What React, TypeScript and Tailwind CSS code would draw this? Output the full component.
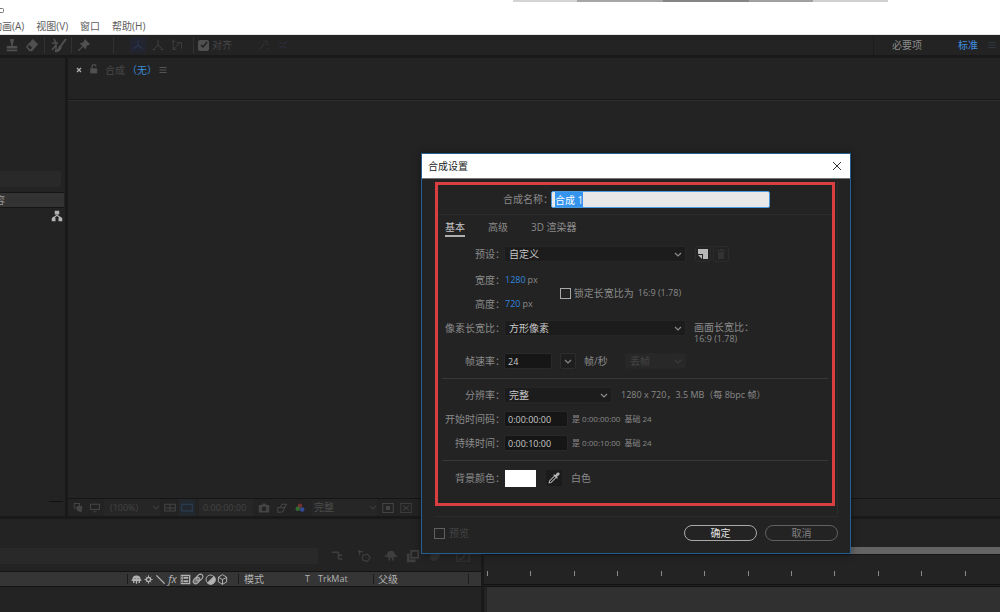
import { useEffect, useRef } from "react";
import type { ReactNode, SelectHTMLAttributes } from "react";

function Icon({ children, className = "", size = "size-3" }: { children: ReactNode; className?: string; size?: string }) {
  return (
    <svg
      viewBox="0 0 16 16"
      className={"shrink-0 " + size + " " + className}
      fill="none"
      stroke="currentColor"
      strokeWidth="1.4"
      aria-hidden="true"
    >
      {children}
    </svg>
  );
}

function Chevron({ className = "" }: { className?: string }) {
  return (
    <svg viewBox="0 0 8 5" className={"h-[5px] w-2 shrink-0 " + className} fill="none" stroke="currentColor" strokeWidth="1.2" aria-hidden="true">
      <path d="M1 1l3 3 3-3" />
    </svg>
  );
}

function ToolButton({ label, children, className = "" }: { label: string; children: ReactNode; className?: string }) {
  return (
    <button type="button" aria-label={label} className={"flex h-4 shrink-0 items-center justify-center " + className}>
      {children}
    </button>
  );
}

function Separator({ className = "" }: { className?: string }) {
  return <span className={"h-4 w-px shrink-0 bg-[#323232] " + className} />;
}

function MenuBar() {
  return (
    <header className="relative h-[35px] shrink-0 overflow-hidden border-b border-[#e4e4e4] bg-white">
      <div className="absolute left-[513px] top-0 flex h-0.5 w-[375px]">
        <span className="w-16 bg-[#d4d4d4]" />
        <span className="w-[86px] bg-[#a6a6a6]" />
        <span className="w-[86px] bg-[#858585]" />
        <span className="w-16 bg-[#a0a0a0]" />
        <span className="flex-1 bg-[#d0d0d0]" />
      </div>
      <svg viewBox="0 0 4 6" className="mt-2 h-1.5 w-1" fill="none" stroke="#777" aria-hidden="true">
        <path d="M0 .5h2.5q1 0 1 1v2q0 1-1 1H0" />
      </svg>
      <nav className="-ml-2 mt-1 flex gap-3 text-[10px] leading-4 text-[#5c5c5c]">
        <a href="#animation">动画(A)</a>
        <a href="#view">视图(V)</a>
        <a href="#window">窗口</a>
        <a href="#help">帮助(H)</a>
      </nav>
    </header>
  );
}

function Toolbar() {
  return (
    <div className="flex h-[23px] shrink-0 items-center border-b-3 border-[#191919] bg-[#232323] text-[10px] text-[#505050]">
      <ToolButton label="仿制图章" className="ml-1 w-4">
        <Icon size="size-3.5">
          <path fill="currentColor" stroke="none" d="M6 1h4v3l-1 2v3h5v3H2V9h5V6L6 4zM2 13h12v2H2z" />
        </Icon>
      </ToolButton>
      <ToolButton label="橡皮擦" className="ml-1 w-4">
        <Icon size="size-3.5">
          <path fill="currentColor" stroke="none" fillRule="evenodd" d="M9 1l6 6-7 8H5L1 10zM5 8l-2 2 3 3 2-2z" />
        </Icon>
      </ToolButton>
      <Separator className="ml-1" />
      <ToolButton label="Roto 笔刷" className="ml-1.5 w-4">
        <Icon size="size-4">
          <path d="M3 2l2 4v8M1 6h6M1 13l4-5" strokeWidth="1.5" />
          <path d="M15 2l-6 8M9 9q-1 5-5 5 4 1 6-4" strokeWidth="2" />
        </Icon>
      </ToolButton>
      <Separator className="ml-1" />
      <ToolButton label="操控点" className="ml-1 w-4">
        <Icon size="size-3.5">
          <path fill="currentColor" stroke="none" d="M9 1l6 6-2 1-2 1-1 4-3-3-5 5-1-1 5-5-3-3 4-1 1-2z" />
        </Icon>
      </ToolButton>
      <Separator className="ml-[21px]" />
      <ToolButton label="本地轴" className="ml-4 w-4 bg-[#222530] text-[#2a3655]">
        <Icon>
          <path d="M8 2v7l-6 4M8 9l6 4" />
        </Icon>
      </ToolButton>
      <ToolButton label="世界轴" className="ml-1 w-4">
        <Icon className="text-[#404040]">
          <path d="M8 1v7l-5 5M8 8l5 5M1 14h3M12 14h3" />
        </Icon>
      </ToolButton>
      <ToolButton label="视图轴" className="ml-[3px] w-4">
        <Icon className="text-[#3c3c3c]">
          <path d="M1 3h5M3 1v13h4M3 14l10-10M7 5h7v8" />
        </Icon>
      </ToolButton>
      <Separator className="ml-2" />
      <label className="ml-1 flex items-center gap-[3px] text-[#484848]">
        <input type="checkbox" defaultChecked className="peer sr-only" />
        <span className="flex size-[11px] items-center justify-center rounded-xs bg-[#505050] text-[#202020]">
          <svg viewBox="0 0 8 8" className="size-2" fill="none" stroke="currentColor" strokeWidth="1.5" aria-hidden="true">
            <path d="M1 4l2 2 4-5" />
          </svg>
        </span>
        对齐
      </label>
      <ToolButton label="对齐边缘" className="ml-6 w-4">
        <Icon className="text-[#343434]">
          <path d="M2 14l7-8M7 3h5v5M12 13h2" />
        </Icon>
      </ToolButton>
      <ToolButton label="对齐特征" className="ml-[3px] w-4">
        <Icon className="text-[#2b2b3c]">
          <path d="M2 3l4 3h4l4-3M2 13l4-3h4l4 3" />
        </Icon>
      </ToolButton>
      <div className="ml-auto flex h-full w-[127px] items-center whitespace-nowrap border-l border-[#1c1c1c] pl-[18px]">
        <button type="button" className="shrink-0 text-[#8c8c8c]">必要项</button>
        <button type="button" className="ml-9 shrink-0 text-[#3f8fe0]">标准</button>
        <button type="button" aria-label="工作区菜单" className="ml-2.5 shrink-0 text-[#2f3642]">
          <Icon size="size-2">
            <path d="M1 3h14M1 8h14M1 13h14" strokeWidth="2" />
          </Icon>
        </button>
      </div>
    </div>
  );
}

function ProjectPanel() {
  return (
    <aside className="flex w-[68px] shrink-0 flex-col border-r-3 border-[#191919]">
      <div className="mr-1 mt-[113px] h-4 rounded-r-xs bg-[#292929]" />
      <div className="mr-px mt-[5px] h-4 overflow-hidden border-y border-[#151515] bg-[#333333]">
        <span className="-ml-[5px] block text-[10px] leading-3.5 text-[#999]">容</span>
      </div>
      <div className="mr-0.5 mt-0.5 flex justify-end text-[#b4b4b4]">
        <Icon>
          <path fill="currentColor" stroke="none" d="M5 1h6v5H5zM1 11l2-2h2l1 2v4H1zM10 11l1-2h2l2 2v4h-5z" />
          <path d="M8 6v2M4 10l4-3 4 3" />
        </Icon>
      </div>
      <div className="mb-3.5 mr-0.5 mt-auto h-px w-3.5 self-end bg-[#111]" />
    </aside>
  );
}

function CompositionPanel() {
  return (
    <section className="flex min-w-0 flex-1 flex-col">
      <div className="flex h-[42px] items-start border-b border-[#171717] pt-1 text-[10px] leading-4">
        <button type="button" aria-label="关闭" className="ml-2 flex h-4 items-center text-[#b0b0b0]">
          <svg viewBox="0 0 6 6" className="size-1.5" fill="none" stroke="currentColor" strokeWidth="1.3" aria-hidden="true">
            <path d="M1 1l4 4M5 1L1 5" />
          </svg>
        </button>
        <Icon size="size-2.5" className="ml-[7px] mt-0.5 text-[#505050]">
          <path fill="currentColor" stroke="none" d="M2 7h11v8H2z" />
          <path d="M5 7V4q0-3 3-3t3 3" strokeWidth="2" />
        </Icon>
        <span className="ml-1.5 text-[#484848]">合成</span>
        <span className="ml-0.5 text-[#3a8ddb]">（无）</span>
        <button type="button" aria-label="面板菜单" className="ml-0.5 flex h-4 items-center text-[#555]">
          <Icon size="size-2">
            <path d="M1 3h14M1 8h14M1 13h14" strokeWidth="2" />
          </Icon>
        </button>
      </div>
      <div className="flex-1 border-t border-[#2d2d2d]" />
      <div className="flex h-[18px] shrink-0 items-center border-t border-[#151515] text-[9px] text-[#444]">
        <Icon className="ml-1">
          <path d="M3 2h7v6H3z" />
          <path fill="currentColor" d="M7 6h6l-1 7-5-2z" />
        </Icon>
        <Icon className="ml-[5px]">
          <path d="M2 3h12v7H2zM6 13h4" />
        </Icon>
        <button type="button" className="ml-[3px] flex h-full w-14 items-center justify-between bg-[#262626] pl-1.5">
          (100%)
          <Chevron className="text-[#3a3a3a]" />
        </button>
        <Icon className="ml-1">
          <path d="M1 3h14v9H1zM8 3v9M1 8h14" />
        </Icon>
        <span className="ml-[3px] flex h-full w-4 items-center justify-center bg-[#22282e] text-[#2b4058]">
          <Icon>
            <path d="M1 3h14v9H1z" />
          </Icon>
        </span>
        <button type="button" className="ml-1 flex h-full w-[54px] items-center bg-[#272727] pl-1">0:00:00:00</button>
        <Icon className="ml-[5px]">
          <path fill="currentColor" stroke="none" fillRule="evenodd" d="M1 4h4l1-2h4l1 2h4v10H1zM8 6a3 3 0 100 6 3 3 0 000-6z" />
        </Icon>
        <Icon className="ml-1.5">
          <path d="M8 3h6l-2 4-3 6-6 1-1-6 4-1zM6 7q4 2 6-1" />
        </Icon>
        <Icon className="ml-1.5">
          <circle cx="8" cy="5" r="3" fill="#742f2f" stroke="none" />
          <circle cx="5" cy="9" r="3" fill="#316b31" stroke="none" />
          <circle cx="11" cy="10" r="3" fill="#334b94" stroke="none" />
        </Icon>
        <button type="button" className="ml-1.5 flex h-full w-[65px] items-center justify-between bg-[#262626] pl-0.5 text-[10px] text-[#4d4d4d]">
          完整
          <Chevron className="text-[#3a3a3a]" />
        </button>
        <Icon className="ml-[5px]">
          <path d="M1 2h14v12H1z" />
          <path fill="currentColor" d="M6 6h4v4H6z" />
        </Icon>
        <Icon className="ml-1.5 text-[#3c3c3c]">
          <path d="M1 2h14v12H1zM4 5l8 6M12 5l-8 6" />
        </Icon>
      </div>
    </section>
  );
}

const tickMarks = Array.from({ length: 12 }, (_, i) => i);

function TimelinePanel() {
  return (
    <section className="flex h-24 shrink-0 border-t-3 border-[#191919] text-[10px]">
      <div className="flex w-[484px] shrink-0 flex-col border-r-3 border-[#191919]">
        <div className="mt-[29px] flex h-4 items-center text-[#3e3e3e]">
          <input aria-label="搜索图层" className="h-4 w-[318px] bg-[#292929] outline-none" />
          <Icon className="ml-[13px]">
            <path d="M1 3h9M10 3v9M10 7h5M10 12h5" strokeWidth="2" />
          </Icon>
          <Icon size="size-3.5" className="ml-3.5">
            <path d="M3 1v6M1 3h6M7 7l5-1 3 4-3 4-5-1-1-3z" />
          </Icon>
          <Icon size="size-3.5" className="ml-[13px]">
            <path fill="currentColor" stroke="none" d="M3 7q1-5 5-5t5 5h2v2h-4v4H9v-3H7v3H5V9H1V7z" />
          </Icon>
          <Icon size="size-3.5" className="ml-2">
            <path fill="currentColor" fillRule="evenodd" stroke="none" d="M5 1h10v10H5zM7 3v6h6V3zM1 5h3v7h7v3H1z" />
          </Icon>
          <Icon size="size-3.5" className="ml-2 text-[#303030]">
            <ellipse cx="8" cy="8" rx="6" ry="4" fill="currentColor" transform="rotate(-40 8 8)" />
          </Icon>
          <Icon size="size-3.5" className="ml-3.5 text-[#333]">
            <path d="M1 2h14v12H1zM3 12q5 0 6-4t5-4" />
          </Icon>
        </div>
        <div className="mt-[7px] flex h-4 items-center border-y border-[#131313] bg-[#353535] text-[#b2b2b2]">
          <span className="ml-[127px] mr-[3px] h-2.5 w-px shrink-0 bg-[#1c1c1c]" />
          <Icon size="size-[11px]">
            <path fill="currentColor" stroke="none" fillRule="evenodd" d="M2 8q0-6 6-6t6 6h1v2h-2v3h-2v-3H9v4H7v-4H5v3H3v-3H1V8zM5 6v1h2V6zM9 6v1h2V6z" />
          </Icon>
          <Icon size="size-[11px]" className="ml-px">
            <circle cx="8" cy="8" r="3" strokeWidth="2" />
            <path d="M8 2v3M8 11v3M2 8h3M11 8h3M4 4l1 1M11 11l1 1M12 4l-1 1M4 12l1-1" />
          </Icon>
          <Icon size="size-[11px]" className="ml-px">
            <path d="M2 2l12 12" strokeWidth="2" />
          </Icon>
          <i className="ml-px w-[11px] text-center text-[11px] leading-3">fx</i>
          <Icon size="size-[11px]" className="ml-0.5">
            <path fill="currentColor" fillRule="evenodd" stroke="none" d="M1 1h14v14H1zM4 3v10h9V3zM5 4h7v3H5zM5 9h7v3H5zM2 3v2h1V3zM2 7v2h1V7zM2 11v2h1v-2z" />
          </Icon>
          <Icon className="ml-px">
            <ellipse cx="6" cy="10" rx="5" ry="3.5" transform="rotate(-45 6 10)" fill="#707070" />
            <ellipse cx="10" cy="6" rx="5" ry="3.5" transform="rotate(-45 10 6)" />
          </Icon>
          <Icon size="size-[11px]" className="ml-px">
            <circle cx="8" cy="8" r="6.5" />
            <path fill="currentColor" d="M13 3.500A6.500 6.500 0 013.500 13z" />
          </Icon>
          <Icon size="size-[11px]" className="ml-px">
            <path d="M8 1l6 3.500v7L8 15l-6-3.500v-7zM2 5l6 3 6-3M8 8v7" />
          </Icon>
          <span className="ml-2.5 h-2.5 w-px bg-[#1c1c1c]" />
          <span className="ml-[5px] w-[61px]">模式</span>
          <span className="w-[13px] text-[9px]">T</span>
          <span className="text-[9px]">TrkMat</span>
          <span className="ml-auto h-2.5 w-px bg-[#1c1c1c]" />
          <span className="ml-1">父级</span>
          <span className="ml-[70px] mr-3 h-2.5 w-px bg-[#1c1c1c]" />
        </div>
      </div>
      <div className="flex min-w-0 flex-1 flex-col overflow-hidden">
        <div className="mt-[28px] h-2 border-b border-[#151515] bg-[#646464]" />
        <div className="-mr-2 ml-[3px] mt-4 flex h-[13px]">
          {tickMarks.map((i) => (
            <span key={i} className="flex-1">
              <span className="block h-[5px] w-px bg-[#8a8a8a]" />
            </span>
          ))}
        </div>
        <div className="h-[3px] border-y border-[#111]" />
        <div className="ml-[3px] flex-1 bg-[#303030]" />
      </div>
    </section>
  );
}

type FieldSelectProps = SelectHTMLAttributes<HTMLSelectElement> & { option: string; width: string };

function FieldSelect({ option, width, disabled, ...rest }: FieldSelectProps) {
  return (
    <span className={"relative flex items-center " + width + (disabled ? " text-[#444]" : " text-[#c8c8c8]")}>
      <select
        {...rest}
        disabled={disabled}
        className="h-4 w-full appearance-none rounded-xs border border-[#262626] bg-[#1c1c1c] pl-1 text-[10px] leading-3.5 outline-none disabled:bg-[#282828]"
      >
        <option>{option}</option>
      </select>
      <Chevron className={"pointer-events-none absolute right-1 " + (disabled ? "text-[#3a3a3a]" : "text-[#8c8c8c]")} />
    </span>
  );
}

function Row({ label, htmlFor, children, className = "h-6 items-center" }: { label: string; htmlFor?: string; children: ReactNode; className?: string }) {
  return (
    <div className={"flex " + className}>
      <label htmlFor={htmlFor} className="-mr-px w-[67px] shrink-0 whitespace-nowrap text-right leading-4">
        {label}
      </label>
      {children}
    </div>
  );
}

const fieldInput = "h-4 rounded-xs border border-[#292929] bg-[#161616] pl-[3px] text-[9px] text-[#c8c8c8] outline-none";

function CompositionDialog() {
  const nameRef = useRef<HTMLInputElement>(null);

  useEffect(() => {
    nameRef.current?.focus();
    nameRef.current?.select();
  }, []);

  return (
    <div
      role="dialog"
      aria-labelledby="dialog-title"
      className="absolute left-[421px] top-[153px] flex w-[430px] flex-col border border-[#245f92] bg-[#232323] text-[10px] text-[#8a8a8a] shadow-[0_0_8px_rgba(0,0,0,0.4)]"
    >
      <div className="flex h-[25px] items-center justify-between border-b border-[#777] bg-white pl-1.5 pr-2 text-[#222]">
        <h1 id="dialog-title">合成设置</h1>
        <button type="button" aria-label="关闭">
          <svg viewBox="0 0 10 10" className="size-2.5" fill="none" stroke="#333" aria-hidden="true">
            <path d="M1 1l8 8M9 1L1 9" />
          </svg>
        </button>
      </div>
      <form className="flex flex-col">
        <div className="ml-[13px] mr-3 mt-[3px] border-b border-r border-[#2c2c2c] pb-2.5 pr-0.5">
          <div className="h-[324px] border-3 border-[#d93f40]">
            <div className="flex h-[30px] items-center border-b border-[#2d2d2d]">
              <label htmlFor="comp-name" className="ml-[65px] w-12 whitespace-nowrap">
                合成名称：
              </label>
              <input
                id="comp-name"
                ref={nameRef}
                defaultValue="合成 1"
                className="h-[17px] w-[219px] rounded-xs border border-[#4a9ae0] bg-[#e8e8e8] pl-[3px] text-[10px] leading-3 text-[#333] outline-none selection:bg-[#3494ee] selection:text-white"
              />
            </div>
            <div role="tablist" className="flex h-[25px] items-start pl-[7px] pt-1 leading-4">
              <button type="button" role="tab" aria-selected="true" className="h-[18px] border-b-2 border-[#b0b0b0] text-[#c8c8c8]">
                基本
              </button>
              <button type="button" role="tab" aria-selected="false" className="ml-[23px]">高级</button>
              <button type="button" role="tab" aria-selected="false" className="ml-[23px]">3D 渲染器</button>
            </div>
            <Row label="预设：" htmlFor="preset" className="h-7 items-center">
              <FieldSelect id="preset" option="自定义" width="w-[182px]" />
              <button type="button" aria-label="新建预设" className="ml-[9px] flex size-4 items-center justify-center rounded-xs border border-[#2b2b2b] text-[#b8b8b8]">
                <svg viewBox="0 0 10 10" className="size-2.5" fill="currentColor" aria-hidden="true">
                  <path d="M0 0h10v10H5V5H0zM0 6h4v4z" />
                </svg>
              </button>
              <button type="button" aria-label="删除预设" className="ml-0.5 flex size-4 items-center justify-center rounded-xs border border-[#2b2b2b] text-[#333]">
                <svg viewBox="0 0 10 10" className="size-2.5" fill="currentColor" aria-hidden="true">
                  <path d="M1 1h3V0h2v1h3v1H1zM2 3h6v7H2z" />
                </svg>
              </button>
            </Row>
            <div className="flex items-center">
              <div>
                <Row label="宽度：">
                  <button type="button" className="ml-px text-[9px] text-[#2f86de]">1280</button>
                  <span className="ml-0.5 text-[9px]">px</span>
                </Row>
                <Row label="高度：">
                  <button type="button" className="ml-px text-[9px] text-[#2f86de]">720</button>
                  <span className="ml-0.5 text-[9px]">px</span>
                </Row>
              </div>
              <label className="ml-[22px] mt-0.5 flex items-center">
                <input type="checkbox" className="mr-[3px] size-[11px] appearance-none border border-[#a8a8a8]" />
                锁定长宽比为
                <span className="ml-1 text-[9px]">16:9 (1.78)</span>
              </label>
            </div>
            <Row label="像素长宽比：" htmlFor="pixel-aspect" className="h-7 items-start pt-1">
              <FieldSelect id="pixel-aspect" option="方形像素" width="w-[182px]" />
              <span className="ml-2 flex flex-col pt-px leading-3">
                <span>画面长宽比：</span>
                <span className="text-[9px]">16:9 (1.78)</span>
              </span>
            </Row>
            <Row label="帧速率：" htmlFor="frame-rate" className="h-[34px] items-center">
              <input id="frame-rate" defaultValue="24" className={fieldInput + " w-12"} />
              <button type="button" aria-label="选择帧速率" className="ml-2 flex size-4 items-center justify-center rounded-xs border border-[#2d2d2d] bg-[#1e1e1e]">
                <Chevron />
              </button>
              <span className="ml-2 w-[41px]">帧/秒</span>
              <FieldSelect aria-label="丢帧" option="丢帧" width="w-[61px]" disabled />
            </Row>
            <div className="mx-1 border-b border-[#383838]" />
            <div className="pb-[5px] pt-1">
              <Row label="分辨率：" htmlFor="resolution">
                <FieldSelect id="resolution" option="完整" width="w-[108px]" />
                <span className="ml-[9px] text-[9px]">1280 x 720，3.5 MB（每 8bpc 帧）</span>
              </Row>
              <Row label="开始时间码：" htmlFor="start-time">
                <input id="start-time" defaultValue="0:00:00:00" className={fieldInput + " w-16"} />
                <span className="ml-1 text-[8px]">是 0:00:00:00&ensp;基础 24</span>
              </Row>
              <Row label="持续时间：" htmlFor="duration">
                <input id="duration" defaultValue="0:00:10:00" className={fieldInput + " w-16"} />
                <span className="ml-1 text-[8px]">是 0:00:10:00&ensp;基础 24</span>
              </Row>
            </div>
            <div className="mx-1 border-b border-[#383838]" />
            <Row label="背景颜色：" className="h-[34px] items-center">
              <button type="button" aria-label="背景颜色" className="ml-px h-[17px] w-[31px] bg-white" />
              <button type="button" aria-label="吸管" className="ml-2.5 flex size-4 items-center justify-center rounded-xs bg-[#1b1b1b] text-[#b4b4b4]">
                <Icon>
                  <path d="M9 5l2 2-7 7-2.500.5L2 12z" />
                  <path fill="currentColor" stroke="none" d="M7 4l1-1 2 1 2-3q2-1 3 0t0 3l-3 2 1 2-1 1z" />
                </Icon>
              </button>
              <span className="ml-[9px]">白色</span>
            </Row>
          </div>
        </div>
        <div className="flex h-9 items-center px-3 pb-1">
          <label className="flex items-center gap-1 text-[#434343]">
            <input type="checkbox" disabled className="size-[11px] appearance-none border border-[#606060]" />
            预览
          </label>
          <button type="submit" className="ml-auto h-4 w-[73px] rounded-full border border-[#a8a8a8] leading-3.5 text-[#e0e0e0]">
            确定
          </button>
          <button type="button" className="ml-2 h-4 w-[73px] rounded-full border border-[#606060] leading-3.5 text-[#808080]">
            取消
          </button>
        </div>
      </form>
    </div>
  );
}

export default function App() {
  return (
    <div className="relative flex min-h-screen flex-col overflow-hidden bg-[#232323] font-['Open_Sans','Noto_Sans_CJK_SC',sans-serif] text-[10px]">
      <MenuBar />
      <Toolbar />
      <main className="flex flex-1">
        <ProjectPanel />
        <CompositionPanel />
      </main>
      <TimelinePanel />
      <CompositionDialog />
    </div>
  );
}
